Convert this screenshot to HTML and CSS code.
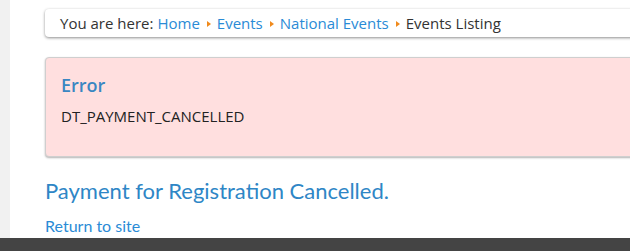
FILE: index.html
```html
<!DOCTYPE html>
<html lang="en">
<head>
    <meta charset="UTF-8">
    <meta name="viewport" content="width=device-width, initial-scale=1.0">
    <title>Payment Cancelled</title>
    <link rel="stylesheet" href="styles.css">
</head>
<body>
    <div class="page">
        <div class="side"></div>
        <div class="main">
            <div class="breadcrumb">
                <span class="here">You are here:</span>
                <a href="#">Home</a><span class="sep"></span>
                <a href="#">Events</a><span class="sep"></span>
                <a href="#">National Events</a><span class="sep"></span>
                <span class="current">Events Listing</span>
            </div>

            <div class="alert-error">
                <h4>Error</h4>
                <div class="alert-msg">DT_PAYMENT_CANCELLED</div>
            </div>

            <h2 class="page-title">Payment for Registration Cancelled.</h2>
            <a class="return-link" href="#">Return to site</a>
        </div>
    </div>
    <div class="footer"></div>
</body>
</html>
```

FILE: styles.css
```css
html, body {
    margin: 0;
    padding: 0;
    overflow: hidden;
}
body {
    background-color: white;
    font-family: "Open Sans", sans-serif;
    color: #333;
}
.page {
    display: flex;
    height: 238px;
}
.side {
    width: 10px;
    flex-shrink: 0;
    background-color: #f1f1f1;
}
.main {
    flex-shrink: 0;
    width: 700px;
    padding: 9px 0 0 35px;
    box-sizing: border-box;
}
a {
    color: #2a8bd6;
    text-decoration: none;
}
.breadcrumb {
    height: 28px;
    display: flex;
    align-items: center;
    padding-left: 15px;
    background-color: white;
    border-radius: 4px;
    box-shadow: 0 1px 3px rgba(0, 0, 0, 0.45);
    font-size: 15px;
    white-space: nowrap;
}
.here {
    margin-right: 4px;
}
.sep {
    display: inline-block;
    width: 0;
    height: 0;
    border-top: 3.5px solid transparent;
    border-bottom: 3.5px solid transparent;
    border-left: 4px solid #f08a1c;
    margin: 2px 6px 0 7px;
}
.alert-error {
    margin-top: 20px;
    height: 100px;
    box-sizing: border-box;
    padding: 15px 15px 0 15px;
    background-color: #ffdfdf;
    border: 1px solid #cfcfcf;
    border-radius: 4px;
    box-shadow: 0 1px 2px rgba(0, 0, 0, 0.3);
}
.alert-error h4 {
    margin: 0;
    font-size: 18px;
    font-weight: 600;
    color: #3a87c2;
    line-height: 25px;
}
.alert-msg {
    margin-top: 8px;
    font-size: 15px;
    color: #222;
}
.page-title {
    margin: 20px 0 0 0;
    font-family: Lato, sans-serif;
    font-weight: 400;
    font-size: 22px;
    line-height: 28px;
    color: #2e86c6;
}
.return-link {
    display: inline-block;
    margin-top: 12px;
    font-family: Lato, sans-serif;
    font-size: 16px;
    line-height: 18px;
}
.footer {
    height: 20px;
    background-color: #444;
}
```
